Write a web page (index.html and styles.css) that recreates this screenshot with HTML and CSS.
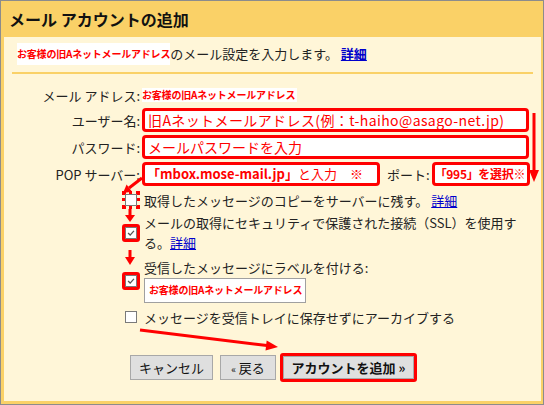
FILE: index.html
```html
<!DOCTYPE html>
<html lang="ja">
<head>
    <meta charset="UTF-8">
    <meta name="viewport" content="width=device-width, initial-scale=1.0">
    <title>メール アカウントの追加</title>
    <link rel="stylesheet" href="styles.css">
</head>
<body>

    <div class="frame">
        <h1 class="title">メール アカウントの追加</h1>

        <div class="panel">
            <p class="intro"><span class="addr-tag">お客様の旧Aネットメールアドレス</span>のメール設定を入力します。 <a href="#" class="link bold">詳細</a></p>
            <div class="rule"></div>

            <div class="form">
                <div class="row row-email">
                    <span class="lbl">メール アドレス:</span>
                    <span class="addr-tag email-val">お客様の旧Aネットメールアドレス</span>
                </div>
                <div class="row">
                    <span class="lbl">ユーザー名:</span>
                    <div class="note note-wide note-user">旧Aネットメールアドレス(例：t-haiho@asago-net.jp)</div>
                </div>
                <div class="row">
                    <span class="lbl">パスワード:</span>
                    <div class="note note-wide">メールパスワードを入力</div>
                </div>
                <div class="row">
                    <span class="lbl">POP サーバー:</span>
                    <div class="note note-pop"><b>「mbox.mose-mail.jp」</b>と入力　※</div>
                    <span class="port-lbl">ポート:</span>
                    <div class="note note-port"><b>「995」を選択※</b></div>
                </div>
            </div>

            <div class="options">
                <div class="opt opt-1">
                    <span class="cb-cell"><span class="mark dotted"><span class="cb"></span></span></span>
                    <span class="opt-text">取得したメッセージのコピーをサーバーに残す。 <a href="#" class="link">詳細</a></span>
                </div>
                <div class="opt opt-2">
                    <span class="cb-cell"><span class="mark solid"><span class="cb"><svg viewBox="0 0 12 12"><path d="M2.5 6 L5 8.5 L9.5 3.5" /></svg></span></span></span>
                    <span class="opt-text">メールの取得にセキュリティで保護された接続（SSL）を使用す<br>る。<a href="#" class="link">詳細</a></span>
                </div>
                <div class="opt opt-3">
                    <span class="cb-cell"><span class="mark solid"><span class="cb"><svg viewBox="0 0 12 12"><path d="M2.5 6 L5 8.5 L9.5 3.5" /></svg></span></span></span>
                    <div class="opt-text">
                        受信したメッセージにラベルを付ける:
                        <div class="label-box"><span class="addr-tag">お客様の旧Aネットメールアドレス</span></div>
                    </div>
                </div>
                <div class="opt opt-4">
                    <span class="cb-cell"><span class="cb"></span></span>
                    <span class="opt-text">メッセージを受信トレイに保存せずにアーカイブする</span>
                </div>
            </div>

            <div class="buttons">
                <button class="btn btn-cancel">キャンセル</button>
                <button class="btn btn-back"><small>«</small> 戻る</button>
                <span class="btn-mark"><button class="btn btn-add">アカウントを追加 »</button></span>
            </div>
        </div>

        <!-- annotation arrows drawn over the form -->
        <svg class="arrows" viewBox="0 0 544 405">
            <line x1="534" y1="113" x2="534" y2="172" />
            <polygon points="529,170 539,170 534,182" />

            <line x1="142" y1="178" x2="129" y2="188" />
            <polygon points="123,193 132,191.7 126.6,184.5" />

            <line x1="130" y1="209" x2="130" y2="216" />
            <polygon points="125,215 135,215 130,222" />

            <line x1="130" y1="250" x2="130" y2="258" />
            <polygon points="125,257 135,257 130,265" />

            <line x1="140" y1="330" x2="267" y2="345.6" />
            <polygon points="278,347 265.5,350.5 266.7,340.5" />
        </svg>
    </div>

</body>
</html>
```

FILE: styles.css
```css
body { margin: 0; font-family: "Noto Sans CJK JP", sans-serif; font-size: 13px; color: #222; }
.frame { position: relative; box-sizing: border-box; width: 544px; height: 405px; border: 1px solid #8c8c8c; background-color: #fad167; display: flex; flex-direction: column; }
.title { margin: 0; height: 36px; line-height: 37px; padding-left: 8px; font-size: 16px; font-weight: bold; color: #111; }
.panel { flex: 1; margin: 0 2px 3px 3px; background-color: #fff6d8; }

.intro { margin: 6px 0 0 13px; height: 22px; line-height: 22px; white-space: nowrap; }
.addr-tag { display: inline-block; background-color: #fff; color: #f00; font-size: 10px; font-weight: bold; line-height: 22px; height: 22px; vertical-align: top; letter-spacing: -0.2px; }
.link { color: #0000cc; text-decoration: underline; }
.bold { font-weight: bold; }
.rule { height: 2px; margin: 7px 8px 0 8px; background-color: #fad167; }

.form { margin-top: 12px; display: flex; flex-direction: column; gap: 3px; }
.row { display: flex; align-items: center; height: 24px; }
.row-email { height: 18px; margin-bottom: 1px; }
.lbl { width: 136px; margin-right: 2px; text-align: right; white-space: nowrap; }
.email-val { height: 14px; line-height: 14px; padding-right: 2px; }
.note { box-sizing: border-box; height: 24px; border: 3px solid #f00; border-radius: 4px; background-color: #fff; color: #f00; font-size: 14px; line-height: 18px; padding-left: 3px; white-space: nowrap; overflow: hidden; }
.note-wide { width: 387px; }
.note-user { letter-spacing: 0.4px; }
.note-pop { width: 238px; padding-left: 2px; font-size: 13px; }
.note-port { width: 98px; padding-left: 0; font-size: 12px; letter-spacing: -0.3px; }
.port-lbl { margin: 0 2px 0 7px; white-space: nowrap; }

.options { margin: 6px 0 0 113px; }
.opt { display: flex; align-items: center; }
.opt-1 { height: 16px; }
.opt-2 { margin-top: 5px; line-height: 20px; }
.opt-3 { margin-top: 5px; line-height: 20px; }
.opt-4 { margin-top: 6px; height: 16px; }
.cb-cell { width: 27px; flex: none; display: flex; justify-content: center; }
.opt-text { white-space: nowrap; }
.cb { box-sizing: border-box; display: block; width: 12px; height: 12px; border: 1px solid #7a7a7a; background-color: #fff; }
.cb svg { display: block; width: 10px; height: 10px; }
.cb path { fill: none; stroke: #555; stroke-width: 1.6; }
.mark { display: block; border: 3px solid #f00; border-radius: 3px; }
.mark.dotted { border-style: dotted; border-radius: 0; }
.label-box { box-sizing: border-box; width: 162px; height: 25px; margin-top: 0; border: 1px solid #a0a0a0; background-color: #fff; padding: 1px 0 0 4px; }
.label-box .addr-tag { line-height: 20px; height: 20px; }

.buttons { margin: 28px 0 0 126px; display: flex; align-items: center; }
.btn { box-sizing: border-box; height: 25px; font-family: inherit; font-size: 13px; color: #111; background-color: #dfdfdf; border: 1px solid #a8a8a8; padding: 0; cursor: pointer; }
.btn-cancel { width: 83px; margin-right: 7px; }
.btn-back { width: 56px; margin-right: 4px; }
.btn-back small { font-size: 10px; }
.btn-mark { display: block; border: 3px solid #f00; border-radius: 3px; }
.btn-add { display: block; width: 131px; height: 23px; font-weight: bold; }

.arrows { position: absolute; top: -1px; left: -1px; width: 544px; height: 405px; pointer-events: none; }
.arrows line { stroke: #f00; stroke-width: 3; }
.arrows polygon { fill: #f00; }
```
